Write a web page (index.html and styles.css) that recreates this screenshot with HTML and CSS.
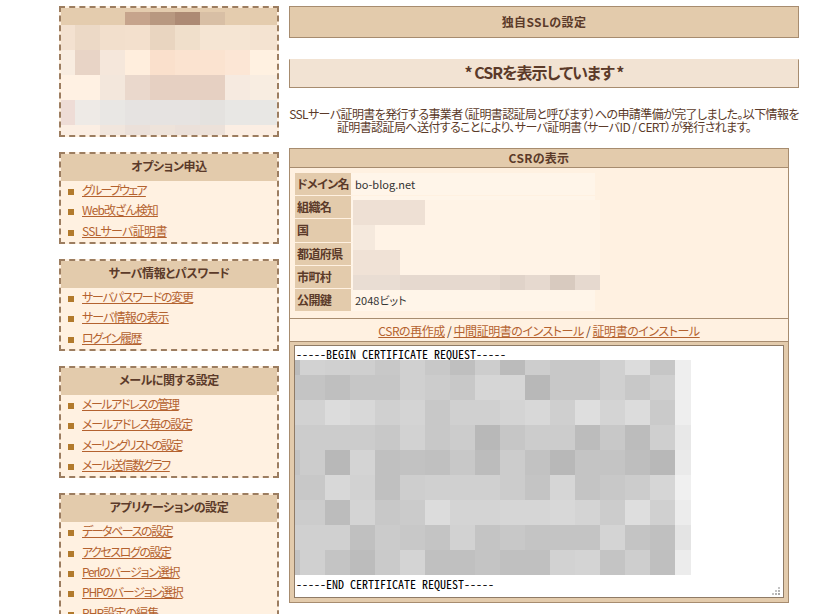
FILE: index.html
```html
<!DOCTYPE html>
<html lang="ja">
<head>
<meta charset="utf-8">
<title>独自SSLの設定</title>
<link rel="stylesheet" href="styles.css">
</head>
<body>
<div class="page">
<aside class="side">
  <div class="box banner">
    <svg class="mosaic" width="216" height="127" viewBox="61 8 216 127" aria-hidden="true">
      <rect x="61" y="8" width="216" height="17" fill="#e4ccae"/>
      <rect x="125" y="12" width="25" height="13" fill="#c6a48c"/><rect x="150" y="12" width="25" height="13" fill="#b89880"/><rect x="175" y="12" width="25" height="13" fill="#ad8a74"/><rect x="200" y="12" width="25" height="13" fill="#d8bfa5"/>
      <g>
        <rect x="61" y="25" width="14" height="25" fill="#f3e1d0"/><rect x="75" y="25" width="25" height="25" fill="#ecd9c6"/><rect x="100" y="25" width="25" height="25" fill="#f2dfcc"/><rect x="125" y="25" width="25" height="25" fill="#f3e0cd"/><rect x="150" y="25" width="25" height="25" fill="#e9d5c0"/><rect x="175" y="25" width="25" height="25" fill="#f0dfcb"/><rect x="200" y="25" width="25" height="25" fill="#f5e5d3"/><rect x="225" y="25" width="25" height="25" fill="#f5e5d3"/><rect x="250" y="25" width="27" height="25" fill="#f4e3d1"/>
      </g>
      <g>
        <rect x="61" y="50" width="14" height="25" fill="#f8ece0"/><rect x="75" y="50" width="25" height="25" fill="#e8d4c6"/><rect x="100" y="50" width="25" height="25" fill="#f5e7db"/><rect x="125" y="50" width="25" height="25" fill="#ffeedd"/><rect x="150" y="50" width="25" height="25" fill="#fae0cc"/><rect x="175" y="50" width="25" height="25" fill="#fbe3d0"/><rect x="200" y="50" width="25" height="25" fill="#fbe3d0"/><rect x="225" y="50" width="25" height="25" fill="#fce6d5"/><rect x="250" y="50" width="27" height="25" fill="#fff1e1"/>
      </g>
      <g>
        <rect x="61" y="75" width="14" height="25" fill="#fff1e3"/><rect x="75" y="75" width="25" height="25" fill="#fff1e3"/><rect x="100" y="75" width="25" height="25" fill="#f3e7dc"/><rect x="125" y="75" width="25" height="25" fill="#ead8cc"/><rect x="150" y="75" width="25" height="25" fill="#e6d0c2"/><rect x="175" y="75" width="25" height="25" fill="#e6d0c2"/><rect x="200" y="75" width="25" height="25" fill="#e6d0c2"/><rect x="225" y="75" width="25" height="25" fill="#f6eae0"/><rect x="250" y="75" width="27" height="25" fill="#f8ede1"/>
      </g>
      <g>
        <rect x="61" y="100" width="14" height="25" fill="#eedcd6"/><rect x="75" y="100" width="25" height="25" fill="#eeeae6"/><rect x="100" y="100" width="25" height="25" fill="#e9e7e4"/><rect x="125" y="100" width="25" height="25" fill="#e6e3e1"/><rect x="150" y="100" width="25" height="25" fill="#e6e3e1"/><rect x="175" y="100" width="25" height="25" fill="#e6e3e1"/><rect x="200" y="100" width="25" height="25" fill="#e4e2df"/><rect x="225" y="100" width="25" height="25" fill="#e8e7e4"/><rect x="250" y="100" width="27" height="25" fill="#e8e7e4"/>
      </g>
      <g>
        <rect x="61" y="125" width="39" height="10" fill="#fbeee3"/><rect x="100" y="125" width="25" height="10" fill="#f1e6dd"/><rect x="125" y="125" width="25" height="10" fill="#ebe0d9"/><rect x="150" y="125" width="25" height="10" fill="#eee3da"/><rect x="175" y="125" width="25" height="10" fill="#ebe0d9"/><rect x="200" y="125" width="25" height="10" fill="#ece1d9"/><rect x="225" y="125" width="52" height="10" fill="#fbeee3"/>
      </g>
    </svg>
  </div>

  <section class="box">
    <h3 class="box-title">オプション申込</h3>
    <ul class="menu">
      <li><a class="tight-5" href="#">グループウェア</a></li>
      <li><a class="tight-2" href="#">Web改ざん検知</a></li>
      <li><a class="tight-1" href="#">SSLサーバ証明書</a></li>
    </ul>
  </section>

  <section class="box">
    <h3 class="box-title">サーバ情報とパスワード</h3>
    <ul class="menu">
      <li><a class="tight-3" href="#">サーバパスワードの変更</a></li>
      <li><a class="tight-2" href="#">サーバ情報の表示</a></li>
      <li><a class="tight-4" href="#">ログイン履歴</a></li>
    </ul>
  </section>

  <section class="box">
    <h3 class="box-title">メールに関する設定</h3>
    <ul class="menu">
      <li><a class="tight-4" href="#">メールアドレスの管理</a></li>
      <li><a class="tight-3" href="#">メールアドレス毎の設定</a></li>
      <li><a class="tight-5" href="#">メーリングリストの設定</a></li>
      <li><a class="tight-4" href="#">メール送信数グラフ</a></li>
    </ul>
  </section>

  <section class="box">
    <h3 class="box-title">アプリケーションの設定</h3>
    <ul class="menu">
      <li><a class="tight-4" href="#">データベースの設定</a></li>
      <li><a class="tight-4" href="#">アクセスログの設定</a></li>
      <li><a class="tight-3" href="#">Perlのバージョン選択</a></li>
      <li><a class="tight-3" href="#">PHPのバージョン選択</a></li>
      <li><a class="tight-2" href="#">PHP設定の編集</a></li>
    </ul>
  </section>
</aside>

<main class="main">
  <h1 class="head">独自SSLの設定</h1>
  <h2 class="sub">* CSRを表示しています *</h2>
  <p class="lead">SSLサーバ証明書を発行する事業者（証明書認証局と呼びます）への申請準備が完了しました。以下情報を<br>証明書認証局へ送付することにより、サーバ証明書（サーバID / CERT）が発行されます。</p>

  <section class="panel">
    <h3 class="panel-title">CSRの表示</h3>
    <div class="info">
      <table class="info-table">
        <tr><th>ドメイン名</th><td>bo-blog.net</td></tr>
        <tr><th>組織名</th><td></td></tr>
        <tr><th>国</th><td></td></tr>
        <tr><th>都道府県</th><td></td></tr>
        <tr><th>市町村</th><td></td></tr>
        <tr><th>公開鍵</th><td>2048ビット</td></tr>
      </table>
      <svg class="info-mosaic" width="250" height="90" viewBox="353 200 250 90" aria-hidden="true">
        <rect x="353" y="200" width="247" height="90" fill="#fff3e6"/>
        <rect x="353" y="200" width="72" height="25" fill="#eee0d4"/>
        <rect x="353" y="225" width="22" height="25" fill="#f5e9dd"/>
        <rect x="353" y="250" width="47" height="25" fill="#f0e2d6"/>
        <rect x="353" y="275" width="47" height="15" fill="#e9ddd3"/>
        <rect x="400" y="275" width="200" height="15" fill="#e6d9cf"/>
        <rect x="500" y="275" width="25" height="15" fill="#e0d3c9"/>
        <rect x="550" y="275" width="25" height="15" fill="#d8cabf"/>
      </svg>
    </div>
    <p class="links"><a href="#">CSRの再作成</a> / <a href="#">中間証明書のインストール</a> / <a href="#">証明書のインストール</a></p>
    <div class="csr">
      <textarea class="csr-text" readonly>-----BEGIN CERTIFICATE REQUEST-----


















-----END CERTIFICATE REQUEST-----</textarea>
      <svg class="csr-mosaic" width="396" height="215" viewBox="295 360 396 215" aria-hidden="true">
        <g>
<rect x="295" y="360" width="5" height="15" fill="#bbb"/><rect x="300" y="360" width="25" height="15" fill="#d2d2d2"/><rect x="325" y="360" width="25" height="15" fill="#d0d0d0"/><rect x="350" y="360" width="25" height="15" fill="#cfcfcf"/><rect x="375" y="360" width="25" height="15" fill="#c8c8c8"/><rect x="400" y="360" width="25" height="15" fill="#d0d0d0"/><rect x="425" y="360" width="25" height="15" fill="#c8c8c8"/><rect x="450" y="360" width="25" height="15" fill="#bfbfbf"/><rect x="475" y="360" width="25" height="15" fill="#cdcdcd"/><rect x="500" y="360" width="25" height="15" fill="#bbb"/><rect x="525" y="360" width="25" height="15" fill="#cdcdcd"/><rect x="550" y="360" width="25" height="15" fill="#c8c8c8"/><rect x="575" y="360" width="25" height="15" fill="#c8c8c8"/><rect x="600" y="360" width="25" height="15" fill="#d0d0d0"/><rect x="625" y="360" width="25" height="15" fill="#dcdcdc"/><rect x="650" y="360" width="25" height="15" fill="#c6c6c6"/><rect x="675" y="360" width="16" height="15" fill="#eee"/>
        </g>
        <g>
<rect x="295" y="375" width="5" height="25" fill="#c4c4c4"/><rect x="300" y="375" width="25" height="25" fill="#c4c4c4"/><rect x="325" y="375" width="25" height="25" fill="#bfbfbf"/><rect x="350" y="375" width="25" height="25" fill="#c6c6c6"/><rect x="375" y="375" width="25" height="25" fill="#c6c6c6"/><rect x="400" y="375" width="25" height="25" fill="#d0d0d0"/><rect x="425" y="375" width="25" height="25" fill="#ccc"/><rect x="450" y="375" width="25" height="25" fill="#c8c8c8"/><rect x="475" y="375" width="25" height="25" fill="#d6d6d6"/><rect x="500" y="375" width="25" height="25" fill="#d6d6d6"/><rect x="525" y="375" width="25" height="25" fill="#b8b8b8"/><rect x="550" y="375" width="25" height="25" fill="#c8c8c8"/><rect x="575" y="375" width="25" height="25" fill="#c8c8c8"/><rect x="600" y="375" width="25" height="25" fill="#d0d0d0"/><rect x="625" y="375" width="25" height="25" fill="#c8c8c8"/><rect x="650" y="375" width="25" height="25" fill="#cfcfcf"/><rect x="675" y="375" width="16" height="25" fill="#eee"/>
        </g>
        <g>
<rect x="295" y="400" width="5" height="25" fill="#d2d2d2"/><rect x="300" y="400" width="25" height="25" fill="#d2d2d2"/><rect x="325" y="400" width="25" height="25" fill="#dcdcdc"/><rect x="350" y="400" width="25" height="25" fill="#d8d8d8"/><rect x="375" y="400" width="25" height="25" fill="#d0d0d0"/><rect x="400" y="400" width="25" height="25" fill="#d4d4d4"/><rect x="425" y="400" width="25" height="25" fill="#c8c8c8"/><rect x="450" y="400" width="25" height="25" fill="#d0d0d0"/><rect x="475" y="400" width="25" height="25" fill="#d0d0d0"/><rect x="500" y="400" width="25" height="25" fill="#d4d4d4"/><rect x="525" y="400" width="25" height="25" fill="#d8d8d8"/><rect x="550" y="400" width="25" height="25" fill="#cfcfcf"/><rect x="575" y="400" width="25" height="25" fill="#dedede"/><rect x="600" y="400" width="25" height="25" fill="#d4d4d4"/><rect x="625" y="400" width="25" height="25" fill="#dcdcdc"/><rect x="650" y="400" width="25" height="25" fill="#cacaca"/><rect x="675" y="400" width="16" height="25" fill="#eee"/>
        </g>
        <g>
<rect x="295" y="425" width="5" height="25" fill="#ccc"/><rect x="300" y="425" width="25" height="25" fill="#ccc"/><rect x="325" y="425" width="25" height="25" fill="#ccc"/><rect x="350" y="425" width="25" height="25" fill="#ccc"/><rect x="375" y="425" width="25" height="25" fill="#c8c8c8"/><rect x="400" y="425" width="25" height="25" fill="#d2d2d2"/><rect x="425" y="425" width="25" height="25" fill="#c8c8c8"/><rect x="450" y="425" width="25" height="25" fill="#ccc"/><rect x="475" y="425" width="25" height="25" fill="#b8b8b8"/><rect x="500" y="425" width="25" height="25" fill="#c6c6c6"/><rect x="525" y="425" width="25" height="25" fill="#ccc"/><rect x="550" y="425" width="25" height="25" fill="#ccc"/><rect x="575" y="425" width="25" height="25" fill="#bcbcbc"/><rect x="600" y="425" width="25" height="25" fill="#c8c8c8"/><rect x="625" y="425" width="25" height="25" fill="#bcbcbc"/><rect x="650" y="425" width="25" height="25" fill="#cfcfcf"/><rect x="675" y="425" width="16" height="25" fill="#e8e8e8"/>
        </g>
        <g>
<rect x="295" y="450" width="5" height="25" fill="#c4c4c4"/><rect x="300" y="450" width="25" height="25" fill="#ccc"/><rect x="325" y="450" width="25" height="25" fill="#b8b8b8"/><rect x="350" y="450" width="25" height="25" fill="#d4d4d4"/><rect x="375" y="450" width="25" height="25" fill="#c0c0c0"/><rect x="400" y="450" width="25" height="25" fill="#c2c2c2"/><rect x="425" y="450" width="25" height="25" fill="#c0c0c0"/><rect x="450" y="450" width="25" height="25" fill="#c8c8c8"/><rect x="475" y="450" width="25" height="25" fill="#bcbcbc"/><rect x="500" y="450" width="25" height="25" fill="#ccc"/><rect x="525" y="450" width="25" height="25" fill="#c2c2c2"/><rect x="550" y="450" width="25" height="25" fill="#b8b8b8"/><rect x="575" y="450" width="25" height="25" fill="#c4c4c4"/><rect x="600" y="450" width="25" height="25" fill="#c4c4c4"/><rect x="625" y="450" width="25" height="25" fill="#bebebe"/><rect x="650" y="450" width="25" height="25" fill="#b8b8b8"/><rect x="675" y="450" width="16" height="25" fill="#eaeaea"/>
        </g>
        <g>
<rect x="295" y="475" width="5" height="25" fill="#c8c8c8"/><rect x="300" y="475" width="25" height="25" fill="#c8c8c8"/><rect x="325" y="475" width="25" height="25" fill="#d8d8d8"/><rect x="350" y="475" width="25" height="25" fill="#d2d2d2"/><rect x="375" y="475" width="25" height="25" fill="#c0c0c0"/><rect x="400" y="475" width="25" height="25" fill="#cecece"/><rect x="425" y="475" width="25" height="25" fill="#d0d0d0"/><rect x="450" y="475" width="25" height="25" fill="#d0d0d0"/><rect x="475" y="475" width="25" height="25" fill="#d0d0d0"/><rect x="500" y="475" width="25" height="25" fill="#ccc"/><rect x="525" y="475" width="25" height="25" fill="#c4c4c4"/><rect x="550" y="475" width="25" height="25" fill="#d6d6d6"/><rect x="575" y="475" width="25" height="25" fill="#c4c4c4"/><rect x="600" y="475" width="25" height="25" fill="#c8c8c8"/><rect x="625" y="475" width="25" height="25" fill="#ccc"/><rect x="650" y="475" width="25" height="25" fill="#d6d6d6"/><rect x="675" y="475" width="16" height="25" fill="#f0f0f0"/>
        </g>
        <g>
<rect x="295" y="500" width="5" height="25" fill="#ccc"/><rect x="300" y="500" width="25" height="25" fill="#ccc"/><rect x="325" y="500" width="25" height="25" fill="#bcbcbc"/><rect x="350" y="500" width="25" height="25" fill="#d4d4d4"/><rect x="375" y="500" width="25" height="25" fill="#c8c8c8"/><rect x="400" y="500" width="25" height="25" fill="#cbcbcb"/><rect x="425" y="500" width="25" height="25" fill="#dcdcdc"/><rect x="450" y="500" width="25" height="25" fill="#d4d4d4"/><rect x="475" y="500" width="25" height="25" fill="#d4d4d4"/><rect x="500" y="500" width="25" height="25" fill="#d6d6d6"/><rect x="525" y="500" width="25" height="25" fill="#d6d6d6"/><rect x="550" y="500" width="25" height="25" fill="#d8d8d8"/><rect x="575" y="500" width="25" height="25" fill="#d4d4d4"/><rect x="600" y="500" width="25" height="25" fill="#ccc"/><rect x="625" y="500" width="25" height="25" fill="#dedede"/><rect x="650" y="500" width="25" height="25" fill="#d0d0d0"/><rect x="675" y="500" width="16" height="25" fill="#ececec"/>
        </g>
        <g>
<rect x="295" y="525" width="5" height="25" fill="#d0d0d0"/><rect x="300" y="525" width="25" height="25" fill="#d0d0d0"/><rect x="325" y="525" width="25" height="25" fill="#d0d0d0"/><rect x="350" y="525" width="25" height="25" fill="#c0c0c0"/><rect x="375" y="525" width="25" height="25" fill="#cbcbcb"/><rect x="400" y="525" width="25" height="25" fill="#c8c8c8"/><rect x="425" y="525" width="25" height="25" fill="#c4c4c4"/><rect x="450" y="525" width="25" height="25" fill="#d2d2d2"/><rect x="475" y="525" width="25" height="25" fill="#c4c4c4"/><rect x="500" y="525" width="25" height="25" fill="#c8c8c8"/><rect x="525" y="525" width="25" height="25" fill="#c4c4c4"/><rect x="550" y="525" width="25" height="25" fill="#c4c4c4"/><rect x="575" y="525" width="25" height="25" fill="#c4c4c4"/><rect x="600" y="525" width="25" height="25" fill="#d4d4d4"/><rect x="625" y="525" width="25" height="25" fill="#c4c4c4"/><rect x="650" y="525" width="25" height="25" fill="#c0c0c0"/><rect x="675" y="525" width="16" height="25" fill="#e4e4e4"/>
        </g>
        <g>
<rect x="295" y="550" width="5" height="25" fill="#c4c4c4"/><rect x="300" y="550" width="25" height="25" fill="#d0d0d0"/><rect x="325" y="550" width="25" height="25" fill="#c4c4c4"/><rect x="350" y="550" width="25" height="25" fill="#bcbcbc"/><rect x="375" y="550" width="25" height="25" fill="#cacaca"/><rect x="400" y="550" width="25" height="25" fill="#d4d4d4"/><rect x="425" y="550" width="25" height="25" fill="#c0c0c0"/><rect x="450" y="550" width="25" height="25" fill="#c0c0c0"/><rect x="475" y="550" width="25" height="25" fill="#c4c4c4"/><rect x="500" y="550" width="25" height="25" fill="#c0c0c0"/><rect x="525" y="550" width="25" height="25" fill="#c0c0c0"/><rect x="550" y="550" width="25" height="25" fill="#d2d2d2"/><rect x="575" y="550" width="25" height="25" fill="#d4d4d4"/><rect x="600" y="550" width="25" height="25" fill="#c4c4c4"/><rect x="625" y="550" width="25" height="25" fill="#cecece"/><rect x="650" y="550" width="25" height="25" fill="#bfbfbf"/><rect x="675" y="550" width="16" height="25" fill="#ececec"/>
        </g>
      </svg>
      <svg class="csr-grip" width="9" height="8" viewBox="0 0 9 8" aria-hidden="true">
        <rect x="6" y="0" width="2" height="2" fill="#c4c4c4"/>
        <rect x="3" y="3" width="2" height="2" fill="#c4c4c4"/><rect x="6" y="3" width="2" height="2" fill="#b4b4b4"/>
        <rect x="0" y="6" width="2" height="2" fill="#c4c4c4"/><rect x="3" y="6" width="2" height="2" fill="#b4b4b4"/><rect x="6" y="6" width="2" height="2" fill="#a8a8a8"/>
      </svg>
    </div>
  </section>
</main>
</div>
</body>
</html>
```

FILE: styles.css
```css
html, body { margin: 0; padding: 0; background: #fff; overflow: hidden; height: 614px; }
body {
  font-family: "Noto Sans CJK JP", "Liberation Sans", sans-serif;
  font-size: 12px;
  font-feature-settings: "palt";
  color: #5b3a29;
}
h1, h2, h3, p, ul { margin: 0; padding: 0; }
.page { display: flex; gap: 10px; padding: 6px 0 0 59px; align-items: flex-start; }

.side { width: 220px; display: flex; flex-direction: column; gap: 15px; flex: none; }
.box { border: 2px dashed #9c7d60; background: #fff1e1; }
.banner { height: 127px; }
.mosaic { display: block; }
.box-title {
  background: #e3cbac;
  height: 27px;
  line-height: 24px;
  text-align: center;
  font-size: 12px;
  font-weight: 700;
  letter-spacing: -0.4px;
  color: #5b3a29;
}
.menu { list-style: none; }
.menu li {
  height: 20.33px;
  line-height: 18px;
  padding-left: 21px;
  position: relative;
  white-space: nowrap;
}
.menu li::before {
  content: "";
  position: absolute;
  left: 7px;
  top: 8px;
  width: 6px;
  height: 6px;
  background: #b27a2c;
}
a { color: #b4622f; text-decoration: underline; }
.tight-1 { letter-spacing: -0.7px; }
.tight-2 { letter-spacing: -0.9px; }
.tight-3 { letter-spacing: -1.2px; }
.tight-4 { letter-spacing: -1.45px; }
.tight-5 { letter-spacing: -1.75px; }

.main { width: 510px; flex: none; }
.head {
  height: 30px;
  line-height: 29px;
  background: #e3cbac;
  border: 1px solid #a78c6f;
  text-align: center;
  font-size: 12px;
  font-weight: 700;
  letter-spacing: 0.4px;
}
.sub {
  margin-top: 21px;
  height: 27px;
  line-height: 25px;
  background: #f2e3d3;
  border: 1px solid #a78c6f;
  border-top-color: #f2e3d3;
  text-align: center;
  font-size: 16px;
  font-weight: 700;
  letter-spacing: -1px;
}
.lead {
  margin-top: 19px;
  line-height: 13px;
  text-align: center;
  white-space: nowrap;
  letter-spacing: -0.6px;
}
.panel {
  margin-top: 15px;
  width: 498px;
  border: 1px solid #a78c6f;
  background: #fff1e1;
}
.panel-title {
  height: 18px;
  line-height: 17px;
  background: #e3cbac;
  border-bottom: 1px solid #a78c6f;
  text-align: center;
  font-size: 12px;
  font-weight: 700;
  letter-spacing: 0.3px;
}
.info { position: relative; height: 151px; padding: 4px 5px 0; box-sizing: border-box; border-bottom: 1px solid #a78c6f; }
.info-table { border-collapse: separate; border-spacing: 0 1px; width: 300px; }
.info-table th {
  width: 56px;
  height: 22.2px;
  padding: 0 0 1px 2px;
  box-sizing: border-box;
  background: #e3cbac;
  text-align: left;
  font-size: 12px;
  font-weight: 700;
  white-space: nowrap;
  letter-spacing: -0.6px;
}
.info-table td {
  background: #fff5e9;
  padding: 0 0 1px 4px;
  font-size: 11px;
  color: #333;
}
.info-mosaic { position: absolute; left: 63px; top: 32px; }
.links { height: 23px; line-height: 22px; padding-top: 1px; box-sizing: border-box; text-align: center; border-bottom: 1px solid #a78c6f; letter-spacing: -0.45px; }
.csr { position: relative; background: #e3cbac; padding: 3px 4px 4px 4px; }
.csr-text {
  display: block;
  width: 100%;
  height: 253px;
  box-sizing: border-box;
  margin: 0;
  padding: 2px 1px;
  border: 1px solid #8f7b66;
  background: #fff;
  color: #000;
  font-family: "Noto Sans CJK JP", monospace;
  font-size: 12px;
  font-feature-settings: "hwid";
  line-height: 12.1px;
  overflow: hidden;
  white-space: pre;
  outline: none;
  resize: none;
}
.csr-mosaic { position: absolute; left: 5px; top: 18px; pointer-events: none; }
.csr-grip { position: absolute; right: 7px; bottom: 7px; }
```
